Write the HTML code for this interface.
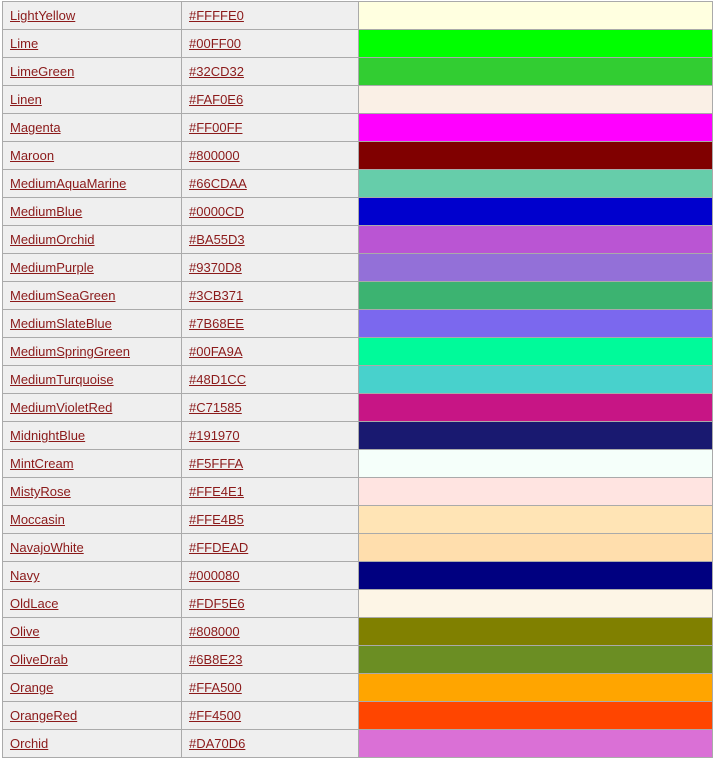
<!DOCTYPE html>
<html><head><style>
body{margin:0;background:#fff;width:718px;height:758px;overflow:hidden;}
table{position:absolute;left:2px;top:1px;border-collapse:collapse;font-family:"Liberation Sans",Arial,sans-serif;font-size:13px;table-layout:fixed;width:710px;}
tr{height:28px;}
td{border:1px solid #aaa;height:28px;padding:0 0 0 7px;box-sizing:border-box;background:#efefef;}
td:nth-child(3){padding:0;}
a{color:#8b1a1a;text-decoration:underline;}
</style></head><body>
<table>
<colgroup><col style="width:179px"><col style="width:177px"><col style="width:354px"></colgroup>
<tr><td><a>LightYellow</a></td><td><a>#FFFFE0</a></td><td style="background:#FFFFE0"></td></tr>
<tr><td><a>Lime</a></td><td><a>#00FF00</a></td><td style="background:#00FF00"></td></tr>
<tr><td><a>LimeGreen</a></td><td><a>#32CD32</a></td><td style="background:#32CD32"></td></tr>
<tr><td><a>Linen</a></td><td><a>#FAF0E6</a></td><td style="background:#FAF0E6"></td></tr>
<tr><td><a>Magenta</a></td><td><a>#FF00FF</a></td><td style="background:#FF00FF"></td></tr>
<tr><td><a>Maroon</a></td><td><a>#800000</a></td><td style="background:#800000"></td></tr>
<tr><td><a>MediumAquaMarine</a></td><td><a>#66CDAA</a></td><td style="background:#66CDAA"></td></tr>
<tr><td><a>MediumBlue</a></td><td><a>#0000CD</a></td><td style="background:#0000CD"></td></tr>
<tr><td><a>MediumOrchid</a></td><td><a>#BA55D3</a></td><td style="background:#BA55D3"></td></tr>
<tr><td><a>MediumPurple</a></td><td><a>#9370D8</a></td><td style="background:#9370D8"></td></tr>
<tr><td><a>MediumSeaGreen</a></td><td><a>#3CB371</a></td><td style="background:#3CB371"></td></tr>
<tr><td><a>MediumSlateBlue</a></td><td><a>#7B68EE</a></td><td style="background:#7B68EE"></td></tr>
<tr><td><a>MediumSpringGreen</a></td><td><a>#00FA9A</a></td><td style="background:#00FA9A"></td></tr>
<tr><td><a>MediumTurquoise</a></td><td><a>#48D1CC</a></td><td style="background:#48D1CC"></td></tr>
<tr><td><a>MediumVioletRed</a></td><td><a>#C71585</a></td><td style="background:#C71585"></td></tr>
<tr><td><a>MidnightBlue</a></td><td><a>#191970</a></td><td style="background:#191970"></td></tr>
<tr><td><a>MintCream</a></td><td><a>#F5FFFA</a></td><td style="background:#F5FFFA"></td></tr>
<tr><td><a>MistyRose</a></td><td><a>#FFE4E1</a></td><td style="background:#FFE4E1"></td></tr>
<tr><td><a>Moccasin</a></td><td><a>#FFE4B5</a></td><td style="background:#FFE4B5"></td></tr>
<tr><td><a>NavajoWhite</a></td><td><a>#FFDEAD</a></td><td style="background:#FFDEAD"></td></tr>
<tr><td><a>Navy</a></td><td><a>#000080</a></td><td style="background:#000080"></td></tr>
<tr><td><a>OldLace</a></td><td><a>#FDF5E6</a></td><td style="background:#FDF5E6"></td></tr>
<tr><td><a>Olive</a></td><td><a>#808000</a></td><td style="background:#808000"></td></tr>
<tr><td><a>OliveDrab</a></td><td><a>#6B8E23</a></td><td style="background:#6B8E23"></td></tr>
<tr><td><a>Orange</a></td><td><a>#FFA500</a></td><td style="background:#FFA500"></td></tr>
<tr><td><a>OrangeRed</a></td><td><a>#FF4500</a></td><td style="background:#FF4500"></td></tr>
<tr><td><a>Orchid</a></td><td><a>#DA70D6</a></td><td style="background:#DA70D6"></td></tr>
</table>
</body></html>
